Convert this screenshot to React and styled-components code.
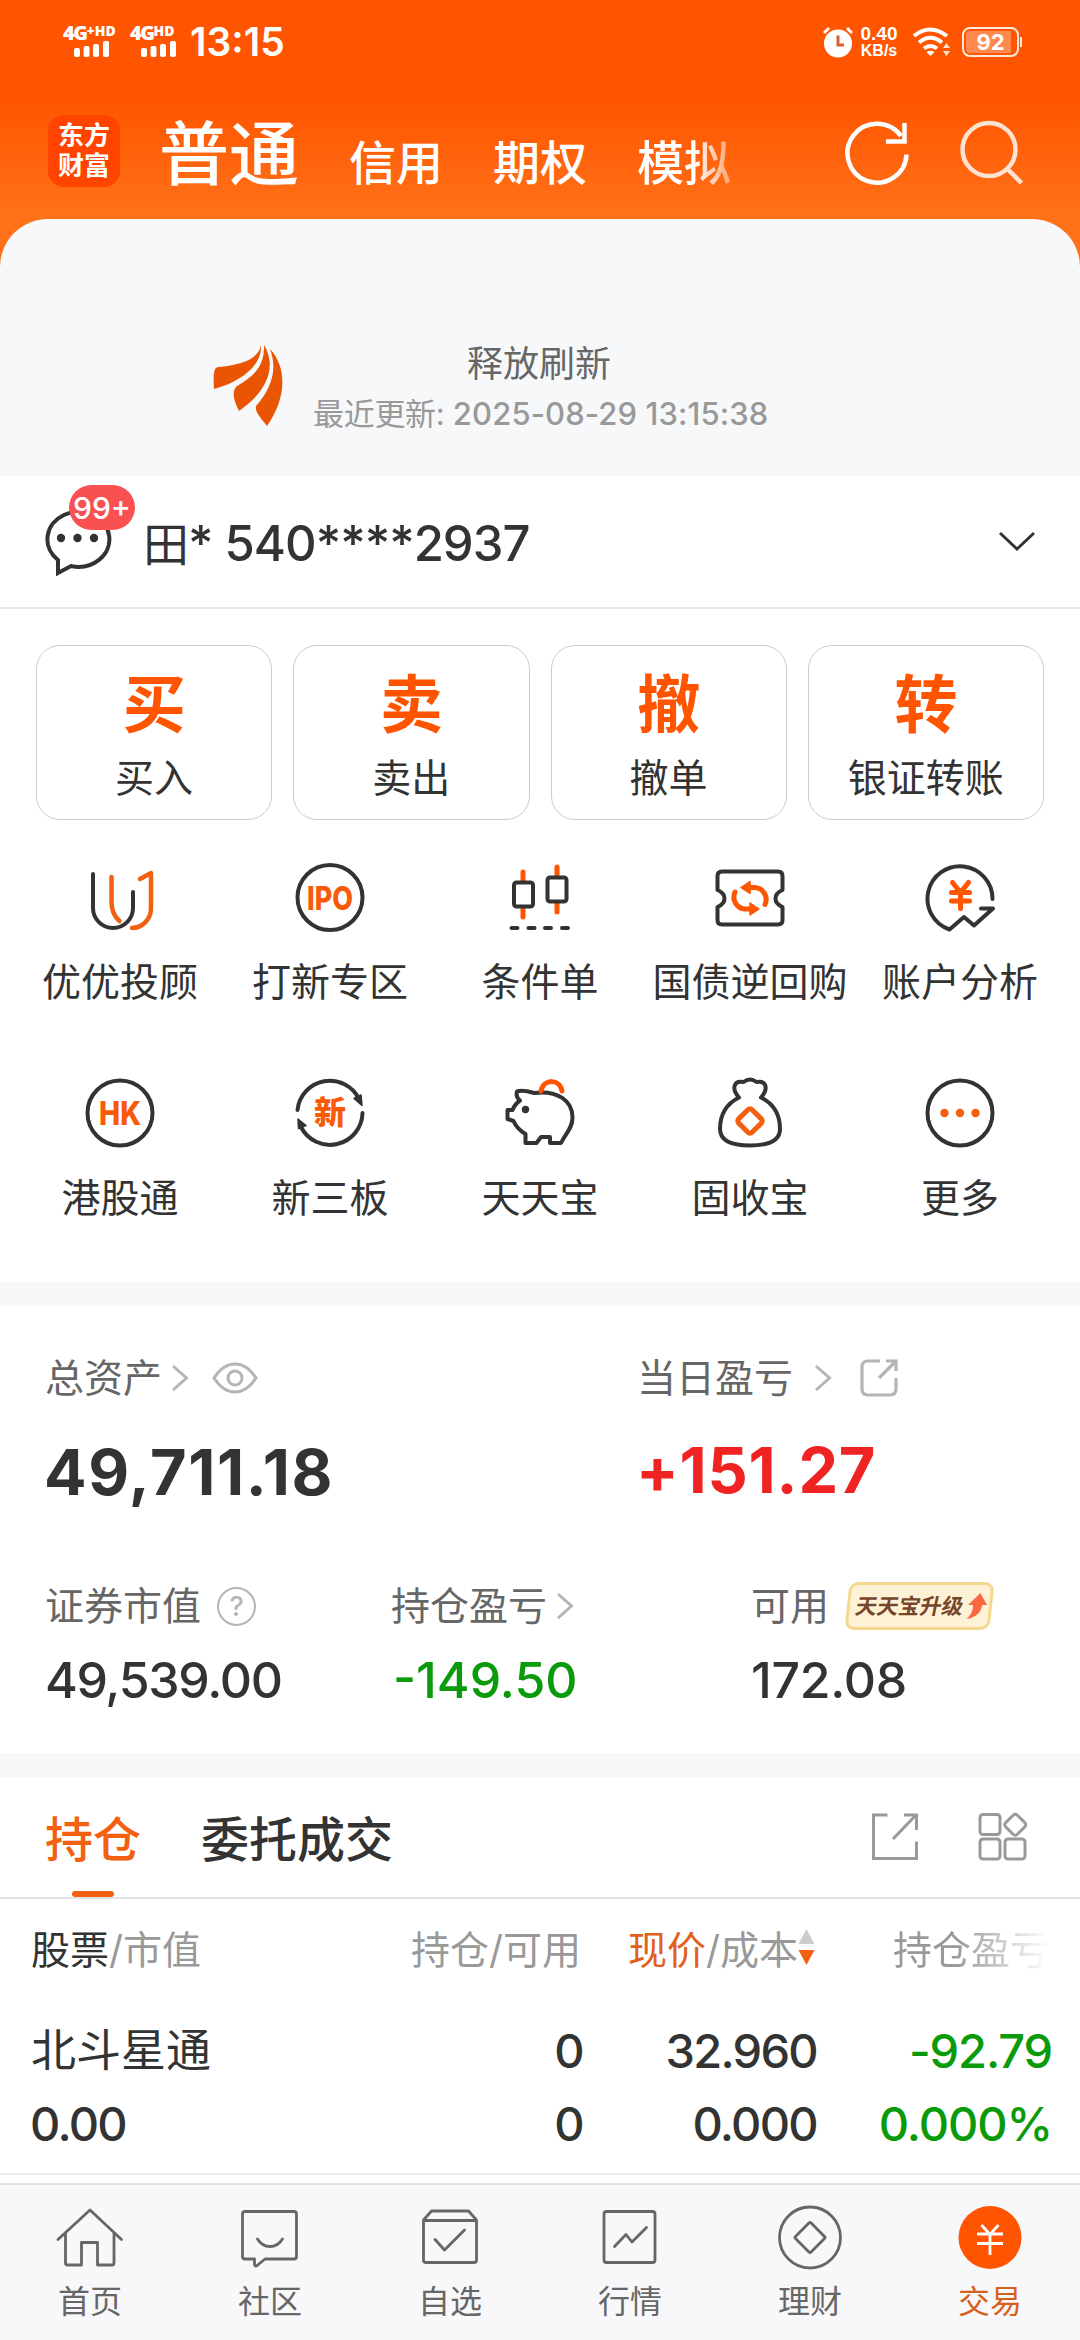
import React from 'react'
import styled, { createGlobalStyle } from 'styled-components'

const ORANGE = '#ff5500'
const DARK = '#333333'

const shortcuts = [
  { label: '优优投顾', icon: 'advisor' },
  { label: '打新专区', icon: 'ipo' },
  { label: '条件单', icon: 'candle' },
  { label: '国债逆回购', icon: 'ticket' },
  { label: '账户分析', icon: 'analysis' },
  { label: '港股通', icon: 'hk' },
  { label: '新三板', icon: 'xin' },
  { label: '天天宝', icon: 'pig' },
  { label: '固收宝', icon: 'bag' },
  { label: '更多', icon: 'more' },
]

const actions = [
  { mark: '买', label: '买入' },
  { mark: '卖', label: '卖出' },
  { mark: '撤', label: '撤单' },
  { mark: '转', label: '银证转账' },
]

const tabs = [
  { label: '首页', icon: 'home' },
  { label: '社区', icon: 'chat' },
  { label: '自选', icon: 'box' },
  { label: '行情', icon: 'chart' },
  { label: '理财', icon: 'coin' },
  { label: '交易', icon: 'trade', active: true },
]

// 功能图标
const glyphs = {
  advisor: (
    <>
      <path d="M9 13v34a20 20 0 0 0 40 0V31" />
      <g stroke="#f26010" strokeWidth="4.500">
        <path d="M27.500 16v25q0 12 8 19" />
        <path d="M56 18l11-6v35a19 20 0 0 1-19 20" />
      </g>
    </>
  ),
  ipo: (
    <>
      <circle cx="36" cy="36.500" r="32.500" />
      <IconText x="36" y="48.500" textLength="46" size={33}>IPO</IconText>
    </>
  ),
  candle: (
    <>
      <g stroke={ORANGE} strokeWidth="5">
        <path d="M19 11v9M19 47v9M53 6v9M53 42v9" />
      </g>
      <rect x="10" y="21.500" width="19" height="24" rx="2.500" />
      <rect x="43.500" y="16.500" width="19" height="24" rx="2.500" />
      <path d="M7.500 67h6M24.500 67h6M41 67h6M58 67h6" />
    </>
  ),
  ticket: (
    <>
      <path d="M8 10.500h56q4.500 0 4.500 4.500v14q-7 3-7 8.500t7 8.500v13q0 4.500-4.500 4.500H8q-4.500 0-4.500-4.500V46q7-3 7-8.500t-7-8.500V15q0-4.500 4.500-4.500z" />
      <g stroke={ORANGE} strokeWidth="5">
        <path d="M35 26.500h6a12 12 0 0 1 10 17" />
        <path d="M37 48h-6a12 12 0 0 1-10-17" />
      </g>
      <path d="M27 26.500l9-6v12zM45 48l-9-6v12z" fill={ORANGE} stroke={ORANGE} strokeWidth="1.500" />
    </>
  ),
  analysis: (
    <>
      <path d="M68.500 38A32.500 32.500 0 1 0 25.500 68.500L40 56l10 8.500L69 47.500H57" />
      <path d="M28.500 21.500l8 10 8-10M27.500 31.500h18M27.500 40h18M36.500 32v15.500" stroke={ORANGE} strokeWidth="5" />
    </>
  ),
  hk: (
    <>
      <circle cx="36" cy="36" r="32.500" />
      <IconText x="36" y="48" textLength="42" size={33}>HK</IconText>
    </>
  ),
  xin: (
    <>
      <path d="M3.500 33A32.500 32.500 0 0 1 65 22M68.500 36A32.500 32.500 0 0 1 7 50" />
      <path d="M60 21.500l7-3.500 1 10.500zM4 42l0.500 9.500 7.500-3z" fill={DARK} strokeWidth="1.500" />
      <IconText x="36" y="47" size={32}>新</IconText>
    </>
  ),
  pig: (
    <>
      <path d="M13 14.500c6-2 12 0 17 1.500 24-3 38.500 8 38.500 24.500 0 11-7 16-11.500 25.500H46v-6h-9l-4.500 6h-11V57C15 53 12 50 9.500 44L3.500 42V33h5c1.500-4 4-7 7.500-9.500-3-2.500-4-6-3-9z" />
      <circle cx="21.500" cy="32.500" r="3.700" fill={DARK} stroke="none" />
      <path d="M37 14c3-13 19-12 21 0" stroke={ORANGE} strokeWidth="5" />
    </>
  ),
  bag: (
    <>
      <path d="M25 20.500C12 27 6 38 6 52c0 12 12 16.500 30 16.500S66 64 66 52c0-14-6-25-19-31.500 8-9 5-17.500-4.500-15.500-4-3-9-3-13 0-9.500-2-12.500 6.500-4.500 15.500z" />
      <rect x="26.500" y="34.500" width="19" height="19" rx="3" transform="rotate(45 36 44)" stroke="#f26010" strokeWidth="5" />
    </>
  ),
  more: (
    <>
      <circle cx="36" cy="36" r="32.500" />
      <g fill="#f26010" stroke="none">
        <circle cx="20.500" cy="36" r="4.200" />
        <circle cx="36" cy="36" r="4.200" />
        <circle cx="51.500" cy="36" r="4.200" />
      </g>
    </>
  ),
  home: (
    <path d="M4 38.500L36 9l31.500 29.500M11.500 32v30q0 2 2 2h14V41.500h16V64h14.500q2 0 2-2V32" />
  ),
  chat: (
    <>
      <path d="M11 10.500h49q2.500 0 2.500 2.500v42.500q0 2.500-2.500 2.500H31l-8.500 7q-2 .5-2-2v-5H11q-2.500 0-2.500-2.500V13q0-2.500 2.500-2.500z" />
      <path d="M23.500 38q4.500 7.500 12.500 7.500T48.500 38" />
    </>
  ),
  box: (
    <>
      <path d="M9.500 19l8-9h37l8 9v40q0 2.500-2.500 2.500H12q-2.500 0-2.500-2.500zM9.500 19.500h53" />
      <path d="M21 38.500l9.500 10.500 20-20" />
    </>
  ),
  chart: (
    <>
      <rect x="10" y="10.500" width="51" height="51" rx="2.500" />
      <path d="M20.500 45.500l11.500-12 6 7.500 14.500-14.500" />
    </>
  ),
  coin: (
    <>
      <circle cx="36" cy="36.500" r="30.500" />
      <rect x="25" y="25.500" width="22" height="22" rx="1.500" transform="rotate(45 36 36.500)" />
    </>
  ),
  trade: (
    <>
      <circle cx="36" cy="36.500" r="31.500" fill={ORANGE} stroke="none" />
      <path d="M27.500 24l8.500 9.500 8.500-9.500M23 33h26M23 42.500h26M36 34v20" stroke="#fff" strokeLinecap="butt" />
    </>
  ),
}

function IconText({ size, children, ...rest }) {
  return (
    <text
      {...rest}
      textAnchor="middle"
      lengthAdjust="spacingAndGlyphs"
      fontSize={size}
      fontWeight="800"
      fill="#f95a08"
      stroke="none"
    >
      {children}
    </text>
  )
}

const Glyph = ({ name, color = DARK, width = 4 }) => (
  <svg width="72" height="72" viewBox="0 0 72 72" fill="none" stroke={color} strokeWidth={width} strokeLinecap="round" strokeLinejoin="round">
    {glyphs[name]}
  </svg>
)

const Chevron = () => (
  <svg width="18" height="28" viewBox="0 0 18 28" fill="none" stroke="#b5b5b5" strokeWidth="3">
    <path d="M2 2l13.500 12L2 26" />
  </svg>
)

const Signal = () => (
  <svg width="36" height="16" viewBox="0 0 36 16" fill="#fff">
    <rect x="0" y="7" width="6" height="9" rx="2" />
    <rect x="9.500" y="5" width="6" height="11" rx="2" />
    <rect x="19" y="3" width="6" height="13" rx="2" />
    <rect x="29" y="0" width="6" height="16" rx="2" />
  </svg>
)

const StatusBar = () => (
  <Status>
    <StatusLeft>
      <Carrier w="58px" inset="11px">
        <Net>4G<sup>+HD</sup></Net>
        <Signal />
      </Carrier>
      <Carrier w="47px" inset="0">
        <Net>4G<sup>HD</sup></Net>
        <Signal />
      </Carrier>
      <Clock>13:15</Clock>
    </StatusLeft>
    <StatusRight>
      <svg width="30" height="32" viewBox="0 0 30 32">
        <circle cx="15" cy="17.500" r="14" fill="#fff" />
        <path d="M1 7l5-5M29 7l-5-5" stroke="#fff" strokeWidth="3" />
        <path d="M15 9.500v9.500h6" stroke="#d9602a" strokeWidth="3" fill="none" />
      </svg>
      <Speed>
        <b>0.40</b>
        <span>KB/s</span>
      </Speed>
      <svg width="40" height="30" viewBox="0 0 40 30" fill="none" stroke="#fff" strokeWidth="4">
        <path d="M2 9q16-13 33 0M7 15.500q11.500-9.500 23 0M12 21.500q6.500-5 13 0" />
        <path d="M14.500 25q4-2.500 8 0l-4 4z" fill="#fff" stroke="none" />
        <path d="M31 21l3.500-5 3.500 5zM31 24l3.500 5 3.500-5z" fill="#ffe4d4" stroke="none" />
      </svg>
      <Battery>
        <Charge>92</Charge>
      </Battery>
    </StatusRight>
  </Status>
)

const Header = () => (
  <TopBar>
    <StatusBar />
    <TitleRow>
      <Brand>
        <span>东方</span>
        <span>财富</span>
      </Brand>
      <MarketTabs>
        <MarketTab $active>普通</MarketTab>
        <MarketTab>信用</MarketTab>
        <MarketTab>期权</MarketTab>
        <MarketTab $fade>模拟</MarketTab>
      </MarketTabs>
      <HeaderIcons>
        <svg width="66" height="68" viewBox="0 0 66 68" fill="none" stroke="#fff" strokeWidth="4.500">
          <path d="M61.500 36.500A29.500 29.500 0 1 1 56 18" />
          <path d="M59.500 5v18.500H41" />
        </svg>
        <svg width="66" height="68" viewBox="0 0 66 68" fill="none" stroke="#ffe3d2" strokeWidth="4.500">
          <circle cx="31" cy="31.500" r="26.500" />
          <path d="M49.500 51l14 14" />
        </svg>
      </HeaderIcons>
    </TitleRow>
  </TopBar>
)

export default function App() {
  return (
    <Page>
      <GlobalStyle />
      <Header />
      <Refresh>
        <svg width="72" height="82" viewBox="0 0 72 82" fill="#ea5504">
          <path d="M48 0C46 13 30 20 5 22 1 23 0 28 1 44 26 37 49 22 48 0z" />
          <path d="M51 0C52 24 37 33 24 41 18 47 21 56 26 66 50 50 66 24 51 0z" />
          <path d="M57 4C73 21 75 51 54 81 45 70 42 66 43 61 58 44 65 25 57 4z" />
        </svg>
        <RefreshText>
          <RefreshTitle>释放刷新</RefreshTitle>
          <RefreshTime>最近更新: <span>2025-08-29 13:15:38</span></RefreshTime>
        </RefreshText>
      </Refresh>

      <Account>
        <Message>
          <svg width="68" height="68" viewBox="0 0 68 68" fill="none" stroke="#333" strokeWidth="4">
            <path d="M14 52A31 27.500 0 1 1 27 58L14 65z" />
            <g fill="#333" stroke="none">
              <circle cx="17" cy="30" r="4.200" />
              <circle cx="33.500" cy="30" r="4.200" />
              <circle cx="50" cy="30" r="4.200" />
            </g>
          </svg>
          <Unread>99+</Unread>
        </Message>
        <AccountName><span>田</span>* 540****2937</AccountName>
        <svg width="38" height="22" viewBox="0 0 38 22" fill="none" stroke="#333" strokeWidth="3">
          <path d="M2 2l17 16L36 2" />
        </svg>
      </Account>

      <Actions>
        {actions.map(item => (
          <ActionCard key={item.label}>
            <ActionMark>{item.mark}</ActionMark>
            <ActionLabel>{item.label}</ActionLabel>
          </ActionCard>
        ))}
      </Actions>

      <Shortcuts>
        {shortcuts.map(item => (
          <Shortcut key={item.label}>
            <Glyph name={item.icon} />
            <span>{item.label}</span>
          </Shortcut>
        ))}
      </Shortcuts>

      <Band />

      <Assets>
        <AssetRow columns="592px 1fr">
          <Asset>
            <AssetLabel gap="9px">
              总资产
              <Chevron />
              <EyeIcon viewBox="0 0 46 32">
                <path d="M2 16q9-14 21-14t21 14q-9 14-21 14T2 16z" />
                <circle cx="23" cy="16" r="7" />
              </EyeIcon>
            </AssetLabel>
            <Total>49,711.18</Total>
          </Asset>
          <Asset>
            <AssetLabel gap="21px">
              当日盈亏
              <Chevron />
              <ShareIcon viewBox="0 0 38 38">
                <path d="M20 2H8Q2 2 2 8v22q0 6 6 6h22q6 0 6-6V19M19 19L35.500 2.500M26 2h10v10" />
              </ShareIcon>
            </AssetLabel>
            <Total up>+151.27</Total>
          </Asset>
        </AssetRow>
        <AssetRow columns="346px 360px 1fr">
          <Asset>
            <AssetLabel gap="16px">
              证券市值
              <Help>?</Help>
            </AssetLabel>
            <Amount spacing="-1.3px">49,539.00</Amount>
          </Asset>
          <Asset>
            <AssetLabel gap="9px">
              持仓盈亏
              <Chevron />
            </AssetLabel>
            <Amount down>-149.50</Amount>
          </Asset>
          <Asset>
            <AssetLabel gap="18px">
              可用
              <Upgrade>
                <em>天天宝升级</em>
                <svg width="20" height="27" viewBox="0 0 20 27" fill="#f9683f">
                  <path d="M12 0l8 12h-5q0 11-14 14 6-6 5-14H1z" />
                </svg>
              </Upgrade>
            </AssetLabel>
            <Amount spacing="-0.3px">172.08</Amount>
          </Asset>
        </AssetRow>
      </Assets>

      <Band />

      <HoldTabs>
        <HoldTab active>持仓</HoldTab>
        <HoldTab>委托成交</HoldTab>
        <HoldTools>
          <svg width="48" height="50" viewBox="0 0 48 50" fill="none" stroke="#999" strokeWidth="3">
            <path d="M16.500 3H2.500v43.500H45.500V29.500M22 27L44.500 3.500M33 3h12.500v15" />
          </svg>
          <svg width="50" height="50" viewBox="0 0 50 50" fill="none" stroke="#999" strokeWidth="3">
            <rect x="2" y="2.500" width="20" height="20" rx="3" />
            <rect x="2" y="27" width="20" height="20" rx="3" />
            <rect x="27" y="27" width="20" height="20" rx="3" />
            <rect x="29" y="4.500" width="16.500" height="16.500" rx="3" transform="rotate(45 37.250 12.750)" />
          </svg>
        </HoldTools>
      </HoldTabs>

      <TableHead>
        <HeadCell><b>股票</b>/市值</HeadCell>
        <HeadCell>持仓/可用</HeadCell>
        <HeadCell>
          <i>现价</i>/成本
          <svg width="17" height="38" viewBox="0 0 17 38">
            <path d="M8.500 1l8 15H.5z" fill="#ccc" />
            <path d="M8.500 37l8-15H.5z" fill="#f26010" />
          </svg>
        </HeadCell>
        <HeadCell fade="true">持仓盈亏</HeadCell>
      </TableHead>
      <Holding>
        <StockName>北斗星通</StockName>
        <Figure>0</Figure>
        <Figure>32.960</Figure>
        <Figure down>-92.79</Figure>
        <Figure>0.00</Figure>
        <Figure>0</Figure>
        <Figure>0.000</Figure>
        <Figure down>0.000%</Figure>
      </Holding>

      <BottomNav>
        {tabs.map(tab => (
          <NavItem key={tab.label} active={tab.active}>
            <Glyph name={tab.icon} color="#666" width={2.8} />
            <span>{tab.label}</span>
          </NavItem>
        ))}
      </BottomNav>
    </Page>
  )
}

const GlobalStyle = createGlobalStyle`
  * {
    box-sizing: border-box;
  }

  body {
    margin: 0;
    background-color: white;
    font-family: Inter, 'Noto Sans CJK SC', sans-serif;
    color: ${DARK};
  }

  svg {
    display: block;
    flex-shrink: 0;
  }
`

const Page = styled.div`
  width: 1080px;
  height: 2340px;
  overflow: hidden;
  display: flex;
  flex-direction: column;
  background: linear-gradient(#ff5500 100px, #ff7119 215px, #ff7119 270px, white 270px);
`

const TopBar = styled.header`
  height: 219px;
  flex-shrink: 0;
`

const Status = styled.div`
  display: flex;
  justify-content: space-between;
  height: 84px;
  padding: 0 61px 0 63px;
  color: white;
`

const StatusLeft = styled.div`
  display: flex;
  align-items: center;
`

const Carrier = styled.div`
  display: flex;
  flex-direction: column;
  align-items: flex-end;
  width: ${props => props.w};
  margin: -2px 9px 0 0;
  padding-right: ${props => props.inset};
`

const Net = styled.div`
  display: flex;
  align-self: flex-start;
  font-family: 'Open Sans', sans-serif;
  font-size: 20px;
  line-height: 16px;
  font-weight: 800;
  letter-spacing: -1.5px;
  white-space: nowrap;

  sup {
    font-size: 14px;
    line-height: 11px;
    letter-spacing: 0;
  }
`

const Clock = styled.div`
  font-size: 39px;
  line-height: 84px;
  font-weight: 600;
  margin-left: 4px;
`

const StatusRight = styled.div`
  display: flex;
  align-items: center;
`

const Speed = styled.div`
  display: flex;
  flex-direction: column;
  align-items: center;
  width: 42px;
  margin: 0 12px 0 5px;
  font-family: 'Liberation Sans', sans-serif;
  font-size: 16px;
  line-height: 16px;
  font-weight: 700;

  b {
    font-size: 19px;
    line-height: 18px;
  }
`

const Battery = styled.div`
  position: relative;
  width: 57px;
  height: 30px;
  margin-left: 10px;
  padding: 2px;
  border: 2px solid #ffe9dc;
  border-radius: 8px;

  &::after {
    content: '';
    position: absolute;
    right: -5px;
    top: 8px;
    width: 2px;
    height: 10px;
    background-color: #ffe9dc;
  }
`

const Charge = styled.div`
  width: 45px;
  height: 22px;
  padding-left: 4px;
  border-radius: 4px 0 0 4px;
  background-color: #ff8a4f;
  font-size: 22px;
  line-height: 22px;
  font-weight: 700;
  text-align: center;
`

const TitleRow = styled.div`
  display: flex;
  align-items: center;
  height: 135px;
  padding: 0 56px 0 48px;
`

const Brand = styled.div`
  width: 72px;
  height: 72px;
  margin-top: -2px;
  padding-top: 6px;
  border-radius: 16px;
  background-color: #ff4400;
  color: white;
  font-size: 26px;
  line-height: 30px;
  font-weight: 700;
  text-align: center;

  span {
    display: block;
  }
`

const MarketTabs = styled.div`
  display: flex;
  align-items: baseline;
  flex: 1;
  margin-left: 39px;
  padding-top: 14px;
  gap: 50px;
`

const MarketTab = styled.div`
  font-size: ${props => props.$active ? '70px' : '47px'};
  line-height: 80px;
  font-weight: 500;
  color: white;
  ${props => props.$fade && 'mask-image: linear-gradient(90deg, #000 60%, rgba(0, 0, 0, 0.4) 100%);'}
`

const HeaderIcons = styled.div`
  display: flex;
  gap: 47px;
`

const Refresh = styled.section`
  display: flex;
  height: 257px;
  flex-shrink: 0;
  padding: 126px 0 0 213px;
  border-radius: 48px 48px 0 0;
  background-color: #f7f8fa;
`

const RefreshText = styled.div`
  width: 452px;
  margin-left: 28px;
  text-align: center;
  white-space: nowrap;
`

const RefreshTitle = styled.div`
  font-size: 36px;
  line-height: 38px;
  color: #666;
`

const RefreshTime = styled.div`
  margin-top: 11px;
  font-size: 31px;
  line-height: 40px;
  letter-spacing: -0.3px;
  color: #999;

  span {
    font-weight: 500;
    letter-spacing: 0.1px;
  }
`

const Account = styled.section`
  display: flex;
  align-items: center;
  height: 133px;
  flex-shrink: 0;
  padding: 0 44px;
  border-bottom: 2px solid #e6e6e6;
  background-color: white;
`

const Message = styled.div`
  position: relative;
`

const Unread = styled.div`
  position: absolute;
  left: 25px;
  top: -23px;
  width: 66px;
  height: 45px;
  border-radius: 23px;
  background-color: #f95151;
  color: white;
  font-size: 30px;
  line-height: 47px;
  font-weight: 500;
  text-align: center;
`

const AccountName = styled.div`
  flex: 1;
  margin-left: 31px;
  padding-top: 5px;
  font-size: 49px;
  line-height: 60px;
  font-weight: 500;
  letter-spacing: -1px;

  span {
    font-size: 46px;
    font-weight: 400;
  }
`

const Actions = styled.section`
  display: grid;
  grid-template-columns: repeat(4, 1fr);
  gap: 21px;
  padding: 36px 36px 0;
`

const ActionCard = styled.div`
  height: 175px;
  border: 1px solid #ccc;
  border-radius: 24px;
  text-align: center;
`

const ActionMark = styled.div`
  padding-top: 21px;
  font-size: 63px;
  line-height: 74px;
  font-weight: 700;
  color: ${ORANGE};
`

const ActionLabel = styled.div`
  font-size: 39px;
  line-height: 73px;
`

const Shortcuts = styled.section`
  display: grid;
  grid-template-columns: repeat(5, 210px);
  grid-auto-rows: 216px;
  height: 462px;
  flex-shrink: 0;
  padding: 41px 15px 0;
`

const Shortcut = styled.div`
  display: flex;
  flex-direction: column;
  align-items: center;
  font-size: 39px;
  line-height: 50px;
  white-space: nowrap;

  span {
    margin-top: 24px;
  }
`

const Band = styled.div`
  height: 24px;
  flex-shrink: 0;
  background-color: #f7f8fa;
`

const Assets = styled.section`
  height: 447px;
  flex-shrink: 0;
  padding: 47px 45px 0;
`

const AssetRow = styled.div`
  display: grid;
  grid-template-columns: ${props => props.columns};
  height: 228px;
`

const Asset = styled.div`
  white-space: nowrap;
`

const AssetLabel = styled.div`
  display: flex;
  align-items: center;
  gap: ${props => props.gap};
  height: 50px;
  font-size: 39px;
  line-height: 50px;
  color: #666;
`

const Total = styled.div`
  margin-top: ${props => props.up ? '28px' : '30px'};
  font-size: 63px;
  line-height: 78px;
  font-weight: 700;
  letter-spacing: ${props => props.up ? '0.8px' : '1.6px'};
  text-indent: -1px;
  color: ${props => props.up ? '#f02323' : DARK};
`

const Amount = styled.div`
  margin-top: 19px;
  font-size: 50px;
  line-height: 60px;
  font-weight: 500;
  letter-spacing: ${props => props.spacing || 0};
  text-indent: ${props => props.down ? '2px' : 0};
  color: ${props => props.down ? '#0a9a0a' : DARK};
`

const EyeIcon = styled.svg`
  width: 46px;
  height: 32px;
  margin-left: 14px;
  fill: none;
  stroke: #b5b5b5;
  stroke-width: 3;
`

const ShareIcon = styled.svg`
  width: 38px;
  height: 38px;
  margin-left: 7px;
  fill: none;
  stroke: #b5b5b5;
  stroke-width: 3.2;
`

const Help = styled.span`
  width: 39px;
  height: 39px;
  border: 2.5px solid #b5b5b5;
  border-radius: 50%;
  color: #b5b5b5;
  font-size: 27px;
  line-height: 35px;
  font-weight: 500;
  text-align: center;
`

const Upgrade = styled.div`
  display: flex;
  align-items: center;
  justify-content: center;
  gap: 3px;
  width: 145px;
  height: 48px;
  padding-left: 4px;
  border: 3px solid #f5d88f;
  border-radius: 9px;
  background-color: #fff1d6;
  transform: skewX(-6deg);

  em {
    font-size: 21.5px;
    line-height: 30px;
    font-weight: 700;
    color: #75462a;
    transform: skewX(-6deg);
    font-style: normal;
  }
`

const HoldTabs = styled.section`
  display: flex;
  height: 122px;
  flex-shrink: 0;
  padding: 0 52px 0 45px;
  border-bottom: 2px solid #e2e2e2;
`

const HoldTab = styled.div`
  position: relative;
  margin-right: 60px;
  font-size: 48px;
  line-height: 125px;
  font-weight: 500;
  color: ${props => props.active ? '#f26010' : DARK};

  &::after {
    content: '';
    display: ${props => props.active ? 'block' : 'none'};
    position: absolute;
    left: 27px;
    bottom: 0;
    width: 42px;
    height: 6px;
    border-radius: 3px;
    background-color: #f26010;
  }
`

const HoldTools = styled.div`
  display: flex;
  align-items: center;
  gap: 59px;
  margin-left: auto;
`

const TableHead = styled.div`
  display: grid;
  grid-template-columns: 1fr 200px 234px 234px;
  height: 108px;
  flex-shrink: 0;
  padding: 23px 31px 0;
`

const HeadCell = styled.div`
  display: flex;
  align-items: center;
  height: 50px;
  font-size: 39px;
  color: #999;
  white-space: nowrap;
  ${props => props.fade && 'mask-image: linear-gradient(90deg, #000 60%, transparent 100%);'}

  &:not(:first-child) {
    justify-content: flex-end;
  }

  b {
    font-weight: 400;
    color: ${DARK};
  }

  i {
    font-style: normal;
    color: #e0601c;
  }
`

const Holding = styled.div`
  display: grid;
  grid-template-columns: 1fr 200px 234px 234px;
  grid-auto-rows: 73px;
  height: 168px;
  flex-shrink: 0;
  padding: 7px 31px 0;
  border-bottom: 2px solid #ededed;
`

const StockName = styled.div`
  font-size: 45px;
  line-height: 73px;
`

const Figure = styled.div`
  margin-right: ${props => props.down ? '-3px' : '-2px'};
  font-size: 47px;
  line-height: 73px;
  font-weight: 500;
  letter-spacing: ${props => props.down ? '-1.1px' : '-1.7px'};
  color: ${props => props.down ? '#0a9a0a' : DARK};
  text-align: right;

  &:nth-child(4n + 1) {
    text-align: left;
    text-indent: -1px;
  }
`

const BottomNav = styled.nav`
  display: grid;
  grid-template-columns: repeat(6, 1fr);
  height: 157px;
  flex-shrink: 0;
  margin-top: auto;
  border-top: 2px solid #e2e2e6;
  background-color: #f8f8fa;
`

const NavItem = styled.div`
  display: flex;
  flex-direction: column;
  align-items: center;
  padding-top: 16px;
  font-size: 32px;
  line-height: 40px;
  color: ${props => props.active ? '#d9601c' : '#666'};

  span {
    margin-top: 9px;
  }
`
